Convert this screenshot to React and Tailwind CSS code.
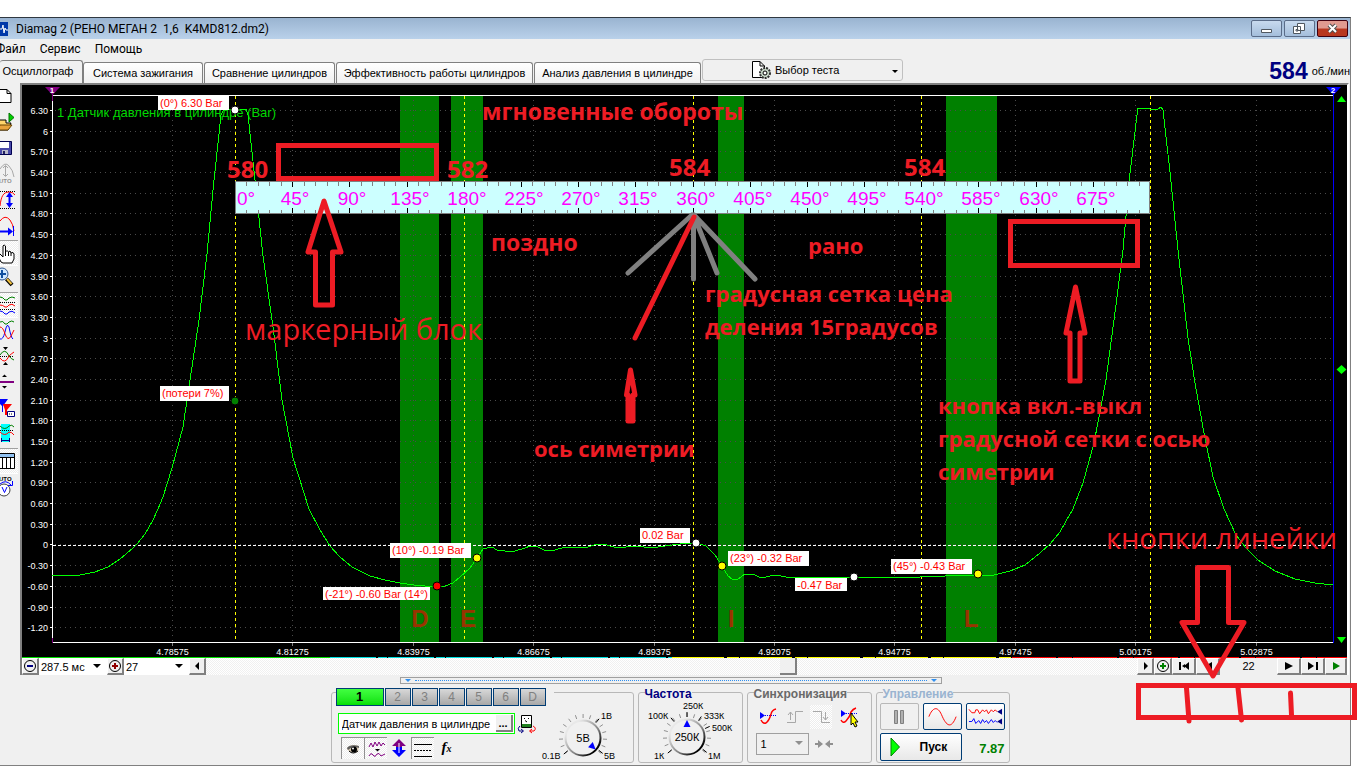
import { Fragment } from "react";
import clsx from "clsx";

const RED = "#ED1C24";

const TABS = [
  { label: "Осциллограф", width: "w-[83px]", active: true },
  { label: "Система зажигания", width: "w-[120px]" },
  { label: "Сравнение цилиндров", width: "w-[131px]" },
  { label: "Эффективность работы цилиндров", width: "w-[197px]" },
  { label: "Анализ давления в цилиндре", width: "w-[167px]" },
];

const Y_LABELS = [
  "6.30", "6", "5.70", "5.40", "5.10", "4.80", "4.50", "4.20", "3.90", "3.60", "3.30",
  "3", "2.70", "2.40", "2.10", "1.80", "1.50", "1.20", "0.90", "0.60", "0.30",
  "0", "-0.30", "-0.60", "-0.90", "-1.20",
];
const X_LABELS = [
  "4.78575", "4.81275", "4.83975", "4.86675", "4.89375",
  "4.92075", "4.94775", "4.97475", "5.00175", "5.02875",
];
const yAt = (i) => Math.round(110 + i * 20.69) + 0.5;
const xAt = (i) => Math.round(172 + i * 120.4) + 0.5;

const BANDS = [
  { x: 400, w: 39, letter: "D", at: 420 },
  { x: 451, w: 32, letter: "E", at: 468 },
  { x: 718, w: 26, letter: "I", at: 731 },
  { x: 946, w: 51, letter: "L", at: 971 },
];

const CURSORS = [235.5, 464.5, 693.5, 921.5, 1150.5];

const TRACE =
  "52,575 80,575 95,572 108,567 120,559 133,548 137,544 145,534 153,520 158,509 163,497 172,468 183,427 190,380 199,320 207,254 213,190 221,115 224,109 232,110 246,109 248,115 255,180 263,256 273,327 282,400 293,458 309,509 320,530 330,546 340,557 352,567 370,576 385,580 400,583 414,585 425,586 437,587 445,586 453,583 460,577 470,568 477,558 483,549 487,548 492,547 497,550 505,551 515,551 525,548 530,546 538,547 546,551 555,550 565,547 585,548 597,544 607,545 617,548 635,546 652,548 665,546 680,544 696,543 706,546 715,555 722,566 728,576 732,579 738,579 745,574 755,575 761,578 775,575 792,578 802,577 854,577 920,577 945,576 978,575 994,575 1010,571 1025,565 1040,553 1050,544 1060,532 1066,521 1073,509 1083,483 1094,443 1099,417 1106,380 1116,305 1123,250 1129,182 1137,115 1138,108 1142,109 1146,108 1150,109 1158,109 1161,107 1163,110 1170,172 1178,250 1188,338 1195,383 1204,433 1213,477 1224,509 1236,535 1246,548 1258,560 1275,571 1295,579 1315,583 1333,585";

const CALLOUTS = [
  { text: "(0°) 6.30 Bar", x: 158, y: 96, w: 71, h: 14 },
  { text: "(потери 7%)", x: 160, y: 386, w: 69, h: 15 },
  { text: "(10°) -0.19 Bar", x: 390, y: 543, w: 81, h: 15 },
  { text: "(-21°) -0.60 Bar (14°)", x: 323, y: 587, w: 107, h: 13 },
  { text: "0.02 Bar", x: 640, y: 528, w: 50, h: 15 },
  { text: "(23°) -0.32 Bar", x: 728, y: 551, w: 81, h: 15 },
  { text: "-0.47 Bar", x: 795, y: 578, w: 52, h: 13 },
  { text: "(45°) -0.43 Bar", x: 891, y: 559, w: 81, h: 15 },
];

const DOTS = [
  { x: 235, y: 110, fill: "#fff" },
  { x: 235, y: 401, fill: "#008000" },
  { x: 437, y: 586, fill: "#f00" },
  { x: 477, y: 558, fill: "#ff0" },
  { x: 696, y: 543, fill: "#fff" },
  { x: 722, y: 566, fill: "#ff0" },
  { x: 854, y: 577, fill: "#fff" },
  { x: 978, y: 574, fill: "#ff0" },
];

const RULER_LABELS = Array.from({ length: 16 }, (_, i) => `${i * 45}°`);
const rulerX = (deg) => 235 + (deg * 915) / 720;

function DegreeRuler() {
  return (
    <g fontFamily="'Liberation Sans', sans-serif" fontSize="19" fill="#f0f" textAnchor="middle">
      <rect x="235" y="181" width="915" height="33" fill="#cff" />
      <path d="M235.5 214V181.5H1149.5V213.5H235" stroke="#808080" fill="none" />
      {Array.from({ length: 79 }, (_, i) => {
        const major = (i + 1) % 5 === 0;
        const x = Math.round(rulerX((i + 1) * 9)) + 0.5;
        return (
          <path
            key={i}
            d={major ? `M${x} 182V187M${x} 208V213` : `M${x} 182V186M${x} 210V213`}
            stroke={major ? "#000" : "#808080"}
          />
        );
      })}
      {RULER_LABELS.map((label, i) => (
        <text key={label} x={i === 0 ? 246 : Math.round(rulerX(i * 45)) + 3} y="205">
          {label}
        </text>
      ))}
    </g>
  );
}

function Scope() {
  return (
    <svg viewBox="22 85 1325 573" className="block w-full bg-black" fontFamily="'Liberation Sans', sans-serif">
      <g shapeRendering="crispEdges">
        {BANDS.map((b) => (
          <rect key={b.letter} x={b.x} y="96" width={b.w} height="546" fill="#008000" />
        ))}
        {Y_LABELS.map((label, i) => (
          <Fragment key={label}>
            <path d={`M55 ${yAt(i)}H1331`} stroke="#4a4a4a" strokeDasharray="1 4" />
            <path d={`M50 ${yAt(i)}H52`} stroke="#fff" />
          </Fragment>
        ))}
        {X_LABELS.map((label, i) => (
          <Fragment key={label}>
            <path d={`M${xAt(i)} 100V641`} stroke="#4a4a4a" strokeDasharray="1 4" />
            <path d={`M${xAt(i)} 643V646`} stroke="#808080" />
          </Fragment>
        ))}
        <path d="M53 545.5H1333" stroke="#fff" strokeDasharray="3 2" />
        {CURSORS.map((x) => (
          <path key={x} d={`M${x} 96V642`} stroke="#ff0" strokeDasharray="3 3" />
        ))}
        <path d="M52 95.5H1333M52.500 95V642.500H1333" stroke="#fff" fill="none" />
        <path d="M52.500 90V101M52.500 638V643" stroke="#800080" />
        <path d="M1333.500 90V643" stroke="#00f" />
      </g>

      <g fill="#fff" fontSize="9">
        {Y_LABELS.map((label, i) => (
          <text key={label} x="48" y={yAt(i) + 3} textAnchor="end">{label}</text>
        ))}
        {X_LABELS.map((label, i) => (
          <text key={label} x={xAt(i)} y="655" textAnchor="middle">{label}</text>
        ))}
      </g>
      <text x="57" y="117" fontSize="13" fill="#00d800">1 Датчик давления в цилиндре (Bar)</text>

      <polyline points={TRACE} fill="none" stroke="#0f0" shapeRendering="crispEdges" />

      <g fontSize="24" fontWeight="700" fill="#993300" textAnchor="middle">
        {BANDS.map((b) => (
          <text key={b.letter} x={b.at} y="627">{b.letter}</text>
        ))}
      </g>

      {CALLOUTS.map((c) => (
        <g key={c.text}>
          <rect x={c.x} y={c.y} width={c.w} height={c.h} fill="#fff" />
          <text x={c.x + 2} y={c.y + 11} fontSize="11" fill="#f00">{c.text}</text>
        </g>
      ))}
      {DOTS.map((d) => (
        <circle key={`${d.x}-${d.y}`} cx={d.x} cy={d.y} r="4" fill={d.fill} stroke="#000" />
      ))}

      <DegreeRuler />

      {/* cursor flags and the level handles on the right */}
      <path d="M45 87H60L52.500 95Z" fill="#800080" />
      <path d="M1326 87H1341L1333.500 95Z" fill="#00f" />
      <g fill="#fff" fontSize="8" fontWeight="700" textAnchor="middle">
        <text x="52" y="93">1</text>
        <text x="1333" y="93">2</text>
      </g>
      <path d="M1337 102L1341.500 96L1346 102ZM1337 637L1341.500 643L1346 637ZM1336.500 369.500L1341.500 365L1346.500 369.500L1341.500 374Z" fill="#0f0" />

      <path d="M22 657.500H330" stroke="#00e000" />
      <path d="M330 657.500H672" stroke="#00e0e0" strokeDasharray="46 2 9 1" />
      <path d="M672 657.500H1012" stroke="#ff0" strokeDasharray="52 3 12 1" />
      <path d="M1012 657.500H1347" stroke="#f00" strokeDasharray="44 2 14 1" />
    </svg>
  );
}

const GRAY = "#a8a8a8";
const TOOLS = [
  {
    name: "Новый",
    icon: <path d="M-5 5.500H7L11 9.500V18.500H-5ZM7 5.500V9.500H11" fill="#fff" stroke="#000" />,
  },
  {
    name: "Открыть",
    icon: (
      <>
        <path d="M-3 20V10H6V13H11L8 20Z" fill="#ffd46b" stroke="#000" />
        <path d="M0 15H12L8 20H-3Z" fill="#e8a33c" stroke="#6b4500" />
        <path d="M9 3L14 7.500L9 12Z" fill="#00d000" stroke="#007000" />
      </>
    ),
  },
  {
    name: "Сохранить",
    icon: (
      <>
        <path d="M-4 5.500H11.500V18.500H-4Z" fill="#4848a8" stroke="#000050" />
        <path d="M0 6H9V12H0Z" fill="#fff" />
        <path d="M2 14H8V18H2Z" fill="#b8b8c8" />
        <path d="M3 15H5V18H3Z" fill="#202060" />
      </>
    ),
  },
  {
    name: "Автомасштаб",
    icon: (
      <>
        <path d="M0 7Q5-1 9 4Q13 8 14 15M5.500 4V14M3 6L5.500 3.500L8 6M3 12L5.500 14.500L8 12" fill="none" stroke={GRAY} />
        <text x="-1" y="21" fontSize="6" fontWeight="700" fill="#909090">UTO</text>
      </>
    ),
  },
  {
    name: "По амплитуде",
    icon: (
      <>
        <path d="M0 3.500H15M0 20.500H15" stroke="#000" strokeDasharray="1 1" />
        <path d="M0 18C1 9 3 4 9 4Q13 4 15 7" fill="none" stroke="#f00" />
        <path d="M9.500 7V17" stroke="#00f" strokeWidth="2" />
        <path d="M6 9L9.500 4L13 9ZM6 15L9.500 20L13 15Z" fill="#00f" />
      </>
    ),
  },
  {
    name: "По времени",
    icon: (
      <>
        <path d="M0 7Q5 0 10 6Q13 10 14 17" fill="none" stroke="#f00" />
        <path d="M0 17.500H10" stroke="#00f" strokeWidth="2" />
        <path d="M8 13.500L13 17.500L8 21.500Z" fill="#00f" />
        <path d="M13.500 12V22" stroke="#00f" />
      </>
    ),
  },
  {
    name: "Рука",
    pressed: true,
    icon: (
      <path
        d="M1 21L-2 15L0 13L3 16V5Q4 3 5.500 5V11L7 9.500L8.500 11L10 10L11 12L13 11.500L14 13V18L12 22H3ZM5.500 11V15M8.500 11V15M11 12V15"
        fill="#fff"
        stroke="#000"
      />
    ),
  },
  {
    name: "Лупа",
    icon: (
      <>
        <circle cx="2" cy="8" r="6" fill="#cfe8ff" stroke="#305890" />
        <path d="M2 4V12M-2 8H6" stroke="#1050a0" strokeWidth="2" />
        <path d="M6.500 13L12 19" stroke="#000" strokeWidth="4" />
        <path d="M7 13L11.500 18" stroke="#f0c040" strokeWidth="2" />
      </>
    ),
  },
  {
    name: "Все каналы",
    pressed: true,
    icon: (
      <g fill="none">
        <path d="M0 4Q3 4 5 7Q7 8 9 5Q12 3 15 5" stroke="#008000" />
        <path d="M0 9.500H15M0 16.500H15" stroke="#000" strokeDasharray="1 1" />
        <path d="M0 12Q3 12 5 14Q7 15 9 12Q12 10 15 13" stroke="#f00" />
        <path d="M0 18Q3 18 5 21Q7 22 9 19Q12 17 15 20" stroke="#00f" />
      </g>
    ),
  },
  {
    name: "Наложение",
    icon: (
      <g fill="none">
        <path d="M0 4Q3 2 5 6Q7 7 9 4Q12 2 14 4" stroke="#008000" />
        <path d="M0 21Q3 22 5 14Q7 4 9 9Q11 20 13 21" stroke="#00f" />
        <path d="M0 9Q3 9 5 16Q8 24 11 18L14 12" stroke="#f00" />
      </g>
    ),
  },
  {
    name: "Совместить",
    icon: (
      <g fill="none">
        <path d="M3 3H8L5.500 6ZM3 21H8L5.500 18Z" fill="#000" />
        <path d="M0 12.500H14" stroke="#000" strokeDasharray="1 1" />
        <path d="M0 11Q5 3 9 12Q11 15 14 16" stroke="#008000" />
        <path d="M0 14Q5 21 9 12Q11 10 14 8" stroke="#f00" />
      </g>
    ),
  },
  {
    name: "Сдвиг",
    icon: (
      <>
        <path d="M2 7H7L4.500 4.500ZM2 16H7L4.500 18.500Z" fill="#000" />
        <path d="M0 12H14" stroke="#800080" strokeWidth="2" />
      </>
    ),
  },
  {
    name: "Маркеры",
    icon: (
      <>
        <path d="M0 3H8L3 10V16H2V10L0 8Z" fill="#00f" />
        <path d="M3 8H12L7 14V19H5V14Z" fill="#f00" />
        <path d="M7.500 15.500H14.500V20.500H7.500Z" fill="#fff" stroke="#000080" />
        <path d="M9 18H13" stroke="#000" strokeDasharray="1 1" />
      </>
    ),
  },
  {
    name: "Область",
    icon: (
      <g fill="none">
        <path d="M1 2H10V20H1Z" fill="#0ff" />
        <path d="M0 4Q5 9 9 4Q12 2 14 5" stroke="#008000" />
        <path d="M0 8.500H14" stroke="#000" strokeDasharray="1 1" />
        <path d="M0 10Q5 15 9 10Q12 10 14 13" stroke="#f00" />
        <path d="M1.500 16V20M9.500 16V20M2 18.500H9" stroke="#000080" />
      </g>
    ),
  },
  {
    name: "Таблица",
    pressed: true,
    icon: (
      <>
        <path d="M-2 4.500H14.500V19.500H-2Z" fill="#fff" stroke="#000" />
        <path d="M0 5H14V8H0Z" fill="#90c0f0" />
        <path d="M0 8.500H14M2.500 8V19M6.500 8V19M10.500 8V19" stroke="#000" />
      </>
    ),
  },
  {
    name: "Авто напряжение",
    icon: (
      <>
        <text x="-1" y="7" fontSize="6" fontWeight="700" fill="#000">UTO</text>
        <circle cx="4" cy="16" r="6" fill="#fff" stroke="#404040" />
        <path d="M0 10Q6 5 11 11M8 11.500H12.500V7" fill="none" stroke="#00f" />
        <path d="M2 13L4.500 18.500L7 13" fill="none" stroke="#00f" />
      </>
    ),
  },
];

function Toolbar() {
  return (
    <div className="flex w-5 shrink-0 flex-col pt-px">
      {TOOLS.map((tool) => (
        <button
          key={tool.name}
          aria-label={tool.name}
          className={clsx(
            "h-[26px] w-[18px] overflow-hidden",
            tool.pressed &&
              "border-t border-b border-t-[#a0a0a0] border-b-white bg-[repeating-conic-gradient(#fff_0_25%,#ededed_0_50%)] bg-[length:2px_2px]"
          )}
        >
          <svg viewBox="0 0 18 26" className="block w-[18px]" fontFamily="'Liberation Sans', sans-serif">
            {tool.icon}
          </svg>
        </button>
      ))}
    </div>
  );
}

function NavButton({ label, width, children }) {
  return (
    <button
      aria-label={label}
      className={clsx(
        "flex shrink-0 items-center justify-center border-t border-r-2 border-b-2 border-l border-t-white border-r-[#808080] border-b-[#808080] border-l-white bg-[#f0f0f0]",
        width
      )}
    >
      <svg viewBox="0 0 14 14" className="h-3.5 w-3.5 shrink-0">{children}</svg>
    </button>
  );
}

function ScrollSelect({ label, value, width }) {
  return (
    <div className={clsx("relative flex shrink-0 bg-white", width)}>
      <select aria-label={label} className="w-full appearance-none pl-0.5 text-[11px] leading-4 outline-none">
        <option>{value}</option>
      </select>
      <svg viewBox="0 0 8 4" className="pointer-events-none absolute top-1.5 right-1.5 h-1 w-2">
        <path d="M0 0H8L4 4Z" />
      </svg>
    </div>
  );
}

function ScrollRow() {
  return (
    <div className="flex h-[17px] bg-white">
      <NavButton label="Сжать" width="w-[17px]">
        <circle cx="7" cy="7" r="5.500" fill="none" stroke="#000" />
        <path d="M4 7H10" stroke="#000080" strokeWidth="2" />
      </NavButton>
      <ScrollSelect label="Развертка" value="287.5 мс" width="w-[68px]" />
      <NavButton label="Растянуть" width="w-[17px]">
        <circle cx="7" cy="7" r="5.500" fill="none" stroke="#000" />
        <path d="M4 7H10M7 4V10" stroke="#900000" strokeWidth="2" />
      </NavButton>
      <ScrollSelect label="Кадр" value="27" width="w-[65px]" />
      <NavButton label="Влево" width="w-[17px]">
        <path d="M9 3V11L5 7Z" />
      </NavButton>
      <div className="flex flex-1 bg-[repeating-conic-gradient(#fff_0_25%,#f0f0f0_0_50%)] bg-[length:2px_2px]">
        <div className="grow-[576]" />
        <button aria-label="Ползунок" className="w-[17px] border-r-2 border-b-2 border-[#808080] bg-[#f0f0f0]" />
        <div className="grow-[341]" />
      </div>
      <NavButton label="Вправо" width="w-[17px]">
        <path d="M6 3V11L10 7Z" />
      </NavButton>
      <NavButton label="Добавить" width="w-[18px]">
        <circle cx="7" cy="7" r="5.500" fill="none" stroke="#000" />
        <path d="M4 7H10M7 4V10" stroke="#008000" strokeWidth="2" />
      </NavButton>
      <NavButton label="В начало" width="w-[24px]">
        <path d="M2 3H4V11H2ZM12 3V11L7 7ZM5 7L8 5V9ZM7 6H9V8H7Z" />
      </NavButton>
      <NavButton label="Назад" width="w-[24px]">
        <path d="M11 3V11L4 7Z" />
      </NavButton>
      <output className="w-[57px] bg-[#f0f0f0] text-center text-[11px] leading-4">22</output>
      <NavButton label="Вперед" width="w-[24px]">
        <path d="M3 3V11L11 7Z" />
      </NavButton>
      <NavButton label="В конец" width="w-[24px]">
        <path d="M2 3V11L8 7ZM10 3H12V11H10Z" />
      </NavButton>
      <NavButton label="Воспроизвести" width="w-[22px]">
        <path d="M4 3V11L11 7Z" fill="#008000" />
      </NavButton>
    </div>
  );
}

function Group({ title, color, width, children }) {
  return (
    <fieldset className={clsx("relative h-[71px] min-w-0 shrink-0 rounded-[3px] border border-[#b8b8b8]", width)}>
      {title && (
        <legend className={clsx("absolute -top-1.5 left-1.5 bg-[#f0f0f0] text-xs leading-[14px] font-bold", color)}>
          {title}
        </legend>
      )}
      {children}
    </fieldset>
  );
}

const polar = (r, deg) => {
  const a = (deg * Math.PI) / 180;
  return `${(r * Math.cos(a)).toFixed(1)} ${(r * Math.sin(a)).toFixed(1)}`;
};

// Rotary switch: origin is the centre of the dial, angles are clockwise from 3 o'clock
function Knob({ id, value, labels, marks, pointer }) {
  return (
    <svg
      viewBox="-44 -36 88 64"
      className="block h-16 w-[88px] shrink-0 overflow-visible"
      fontFamily="'Liberation Sans', sans-serif"
    >
      <defs>
        <linearGradient id={id} x1="0" y1="0" x2="1" y2="1">
          <stop offset="0.2" stopColor="#e8e8e8" />
          <stop offset="0.6" stopColor="#808080" />
          <stop offset="0.85" stopColor="#000" />
        </linearGradient>
      </defs>
      {Array.from({ length: 15 }, (_, i) => (
        <path key={i} d={`M${polar(20, 140 + i * 18.6)}L${polar(24, 140 + i * 18.6)}`} stroke="#909090" />
      ))}
      {marks.map((deg) => (
        <path key={deg} d={`M${polar(20, deg)}L${polar(25, deg)}`} stroke="#000" />
      ))}
      <circle r="17.500" fill="#f0f0f0" stroke={`url(#${id})`} strokeWidth="2" />
      <path d="M17 0L10 3.500V-3.500Z" fill="#00f" transform={`rotate(${pointer})`} />
      <text y="4" fontSize="11" textAnchor="middle">{value}</text>
      <g fontSize="9">
        {labels.map(([text, x, y]) => (
          <text key={text} x={x} y={y}>{text}</text>
        ))}
      </g>
    </svg>
  );
}

const PRESSED =
  "border-t border-l border-[#909090] bg-[repeating-conic-gradient(#fff_0_25%,#ededed_0_50%)] bg-[length:2px_2px]";

function ChannelGroup() {
  return (
    <Group width="w-[303px]">
      <div className="-mt-[5px] ml-1 flex w-fit gap-px bg-[#f0f0f0] pr-2 text-xs">
        <button className="h-[18px] w-12 border border-[#003c74] bg-linear-to-b from-[#40ff40] to-[#00e000] text-[13px] leading-4 font-bold">
          1
        </button>
        {["2", "3", "4", "5", "6", "D"].map((ch) => (
          <button
            key={ch}
            className="h-[18px] w-[26px] border border-[#003c74] bg-linear-to-b from-[#d8d8d8] to-[#a8a8a8] leading-4 text-[#808080]"
          >
            {ch}
          </button>
        ))}
      </div>
      <div className="flex">
        <div className="w-[207px] pt-[7px] pl-1.5">
          <div className="flex items-center gap-0.5">
            <div className="flex h-[21px] w-[177px] items-center border border-[#00ff00] bg-white pr-px">
              <input
                aria-label="Название канала"
                defaultValue="Датчик давления в цилиндре"
                className="min-w-0 flex-1 pl-[3px] text-[11px] leading-4 outline-none"
              />
              <button
                aria-label="Выбрать датчик"
                className="h-[17px] w-[17px] border-r-2 border-b-2 border-[#808080] bg-[#f0f0f0] text-[11px] leading-[8px] font-bold"
              >
                ...
              </button>
            </div>
            <svg viewBox="0 0 20 20" className="h-5 w-5" fill="none">
              <path d="M4.500 1.500H14.500V13.500H4.500Z" fill="#fff" stroke="#000" />
              <path d="M5 10H14V13H5Z" fill="#208020" />
              <path d="M7 4.500H8M11 4.500H12M8 6.500L10 8" stroke="#000" />
              <path d="M3 12Q0 14 2 17H6M4 15L6.500 17L4 19" stroke="#000080" />
              <path d="M16 12Q20 14 17 17H13M15 15L12.500 17L15 19" stroke="#f00" />
            </svg>
          </div>
          <div className="flex items-center pt-[3px] pl-[3px]">
            <button aria-label="Показать" className={clsx("h-[22px] w-[23px]", PRESSED)}>
              <svg viewBox="0 0 22 21" className="block w-full">
                <path d="M5 10Q9 5 17 8L16 14Q9 16 5 11Z" fill="#d8c8b0" />
                <path d="M5 10Q8 6 17 8V10Q11 7 6 12Z" fill="#606060" />
                <circle cx="12" cy="11.500" r="3" />
                <circle cx="11" cy="10.500" r="1" fill="#fff" />
                <path d="M7 13Q11 17 16 13" fill="none" stroke="#000" />
              </svg>
            </button>
            <button aria-label="Фильтр" className={clsx("h-[22px] w-[23px]", PRESSED)}>
              <svg viewBox="0 0 22 21" className="block w-full" fill="none" stroke="#800080">
                <path d="M4 9L6 5L8 9L10 4L12 8L14 4L16 8L18 5L20 7" />
                <path d="M4 18Q6 14 8 17Q10 20 12 16Q14 14 16 18Q18 17 20 16" />
                <path d="M10 11H15L12.500 13.500Z" fill="#000" stroke="none" />
              </svg>
            </button>
            <button aria-label="Инвертировать" className="h-[22px] w-6">
              <svg viewBox="0 0 24 22" className="block w-full">
                <path d="M5 9L12 2L19 9H15V12H9V9Z" fill="#800080" />
                <path d="M5 13L12 20L19 13H15V10H9V13Z" fill="#00f" />
                <path d="M12 6V16" stroke="#fff" />
              </svg>
            </button>
            <button aria-label="Линии" className={clsx("h-[22px] w-[23px]", PRESSED)}>
              <svg viewBox="0 0 22 21" className="block w-full" stroke="#000" shapeRendering="crispEdges">
                <path d="M2 6.500H20M2 18.500H20" />
                <path d="M2 12.500H20" strokeDasharray="2 1" />
              </svg>
            </button>
            <button className="h-[22px] pl-2 font-['Liberation_Serif',serif] text-[15px] leading-5 font-bold italic">
              f<span className="text-[10px]">x</span>
            </button>
          </div>
        </div>
        <div className="-mt-1">
          <Knob
            id="volts"
            value="5В"
            pointer={42}
            marks={[140, -50, 38]}
            labels={[["0.1В", -41, 21], ["1В", 18, -19], ["5В", 21, 21]]}
          />
        </div>
      </div>
    </Group>
  );
}

function SyncGroup() {
  return (
    <Group title="Синхронизация" color="text-[#696969]" width="w-[125px]">
      <div className="flex flex-col gap-1 pt-3 pl-2">
        <div className="flex items-center gap-[5px]">
          <button aria-label="Уровень" className="h-6 w-[22px]">
            <svg viewBox="0 0 22 24" className="block w-full" fill="none">
              <path d="M4 7L9 10.500L4 14Z" fill="#00f" />
              <path d="M5 10.500H20" stroke="#00f" strokeDasharray="1 1" />
              <path d="M5 15Q7 19 10 18Q13 16 15 9Q16 5 20 4" stroke="#f00" strokeWidth="1.500" />
            </svg>
          </button>
          <button aria-label="Фронт" className="h-6 w-[22px]">
            <svg viewBox="0 0 22 24" className="block w-full" fill="none" stroke={GRAY}>
              <path d="M4 17.500H12.500V6.500H20M7.500 7V15M5 10L7.500 7L10 10" />
            </svg>
          </button>
          <button
            aria-label="Спад"
            className="h-6 w-[22px] bg-[repeating-conic-gradient(#fff_0_25%,#ededed_0_50%)] bg-[length:2px_2px]"
          >
            <svg viewBox="0 0 22 24" className="block w-full" fill="none" stroke={GRAY}>
              <path d="M3 6.500H11.500V17.500H20M15.500 7V15M13 12L15.500 15L18 12" />
            </svg>
          </button>
          <button aria-label="Захват" className="h-6 w-[22px]">
            <svg viewBox="0 0 22 24" className="block w-full" fill="none">
              <path d="M4 5L9 8.500L4 12Z" fill="#00f" />
              <path d="M5 8.500H20" stroke="#00f" strokeDasharray="1 1" />
              <path d="M4 15Q6 19 9 16Q13 12 14 7Q16 4 19 3" stroke="#f00" strokeWidth="1.500" />
              <path d="M14 8V20L16 18L18 22L20 21L18 17H21Z" fill="#ff0" stroke="#000" />
            </svg>
          </button>
        </div>
        <div className="flex items-center gap-[5px]">
          <div className="relative flex">
            <select
              aria-label="Канал синхронизации"
              className="h-[22px] w-[53px] appearance-none border border-[#a0a0a0] pl-1 text-[11px] outline-none"
            >
              <option>1</option>
            </select>
            <svg viewBox="0 0 8 4" className="pointer-events-none absolute top-2 right-1.5 h-1 w-2">
              <path d="M0 0H8L4 4Z" fill="#909090" />
            </svg>
          </div>
          <svg viewBox="0 0 20 12" className="h-3 w-5">
            <path d="M1 5H4V2L9 6L4 10V7H1ZM19 5H16V2L11 6L16 10V7H19Z" fill="#909090" />
          </svg>
        </div>
      </div>
    </Group>
  );
}

function ControlGroup() {
  return (
    <Group title="Управление" color="text-[#9ab4d1]" width="w-[134px]">
      <div className="grid grid-cols-3 gap-x-1 gap-y-[3px] px-[3px] pt-2.5 pr-1">
        <button aria-label="Пауза" className="flex h-[27px] items-center justify-center rounded-xs border border-[#b8b8b8]">
          <svg viewBox="0 0 14 16" className="h-4 w-3.5" fill="#b0b0b0" stroke="#808080">
            <path d="M2.500 1.500H5.500V14.500H2.500ZM8.500 1.500H11.500V14.500H8.500Z" />
          </svg>
        </button>
        <button aria-label="Синус" className="h-[27px] rounded-xs border border-[#003c74] bg-linear-to-b from-white to-[#e8e8e8]">
          <svg viewBox="0 0 38 25" className="block w-full" fill="none" stroke="#f00">
            <path d="M5 13C9 3 14 2 18 11C23 23 28 26 33 13" />
          </svg>
        </button>
        <button aria-label="Поток" className="h-[27px] rounded-xs border border-[#003c74] bg-linear-to-b from-white to-[#e8e8e8]">
          <svg viewBox="0 0 38 25" className="block w-full" fill="none">
            <path d="M2 5.500L5 9L8 9L9 6L11 6L13 10L16 6L18 8L20 6L22 10L25 6L27 8L29 6L31 8" stroke="#f00" />
            <path d="M2 18L5 18L7 15L9 20L12 17L14 20L16 16L18 19L20 17L22 20L25 16L27 19L29 17L31 19" stroke="#00f" />
            <path d="M36 5V11L31 8ZM36 15V21L31 18Z" fill="#000080" />
          </svg>
        </button>
        <button className="col-span-2 flex h-7 items-center rounded-xs border border-[#003c74] bg-linear-to-b from-white to-[#e8e8e8] pl-[9px] text-xs font-bold">
          <svg viewBox="0 0 10 20" className="mr-5 h-5 w-2.5">
            <path d="M1 1V19L9.500 10Z" fill="#0f0" stroke="#008000" />
          </svg>
          Пуск
        </button>
        <output className="self-center pt-1 text-right text-[13px] leading-4 font-bold text-[#008000]">7.87</output>
      </div>
    </Group>
  );
}

// Hand-drawn notes laid over the whole window
function Notes() {
  return (
    <svg
      viewBox="0 0 1360 768"
      className="pointer-events-none absolute top-0 left-0 w-full"
      fontFamily="'Open Sans', sans-serif"
      fill={RED}
    >
      <g fill="none" stroke="#808080" strokeWidth="5" strokeLinecap="round">
        <path d="M692 215L628 273M693.500 216V279M694 216L717 273M694 215L755 279" />
        <path d="M694 217L635 338" stroke={RED} />
      </g>
      <g fill="none" stroke={RED} strokeWidth="5" strokeLinejoin="round" strokeLinecap="round">
        <rect x="278.500" y="145.500" width="158" height="33" strokeLinejoin="miter" />
        <rect x="1010.500" y="221.500" width="127" height="44" strokeLinejoin="miter" />
        <rect x="1138.500" y="685.500" width="216" height="32" strokeLinejoin="miter" />
        <path d="M1186.500 688L1189 721M1238 688L1241.500 720M1290.500 693L1291.500 715" />
        <path d="M324 201L308 252H315.500V305H332.500V252H341Z" />
        <path d="M1075.500 287L1066 333H1070V381H1080V333H1085L1075.500 287Z" />
        <path d="M630.500 370L626.500 395H628V421H633V395H635L630.500 370Z" />
        <path d="M1197.500 567.500H1228.500V622.500H1244L1213 676L1182 622.500H1197.500Z" />
      </g>
      <g fontSize="24" fontWeight="700">
        <text x="227" y="178">580</text>
        <text x="447" y="178">582</text>
        <text x="669" y="176">584</text>
        <text x="904" y="176">584</text>
      </g>
      <g fontSize="22" fontWeight="700">
        <text x="482" y="120" fontSize="23">мгновенные обороты</text>
        <text x="491" y="251" fontSize="23">поздно</text>
        <text x="808" y="254">рано</text>
        <text x="705" y="302">градусная сетка цена</text>
        <text x="705" y="335">деления 15градусов</text>
        <text x="534" y="457">ось симетрии</text>
        <text x="938" y="414">кнопка вкл.-выкл</text>
        <text x="938" y="447">градусной сетки с осью</text>
        <text x="938" y="480">симетрии</text>
      </g>
      <g fontSize="29">
        <text x="245" y="340">маркерный блок</text>
        <text x="1106" y="549">кнопки линейки</text>
      </g>
    </svg>
  );
}

export default function App() {
  return (
    <div className="relative min-h-screen overflow-hidden bg-white pt-[17px] pr-[9px] font-['Liberation_Sans',Arial,sans-serif] text-black">
      <div className="border-t border-r border-b border-t-[#303840] border-r-[#808080] border-b-[#808080] bg-[#f0f0f0] pb-0.5">
        {/* Title bar */}
        <header className="flex h-[21px] items-center bg-linear-to-b from-[#9ab4d1] to-[#b9d1ea] pr-0.5">
          <svg viewBox="0 0 8 16" className="mr-2 h-4 w-2">
            <path d="M0 1H8V15H0Z" fill="#0038a8" />
            <path d="M0 8H2L3 4L4 12L5 7L6 9H8" fill="none" stroke="#fff" />
          </svg>
          <h1 className="flex-1 font-[Roboto,sans-serif] text-xs leading-4 whitespace-pre">
            Diamag 2 (РЕНО МЕГАН 2  1,6  K4MD812.dm2)
          </h1>
          <div className="flex gap-0.5">
            <button aria-label="Свернуть" className="h-[17px] w-[31px] rounded-xs border border-[#5a6c88] bg-linear-to-b from-[#c8daee] to-[#a4bedb]">
              <svg viewBox="0 0 29 15" className="block w-full">
                <path d="M9.500 8.500H19.500V11.500H9.500Z" fill="#fff" stroke="#505860" />
              </svg>
            </button>
            <button aria-label="Восстановить" className="h-[17px] w-[31px] rounded-xs border border-[#5a6c88] bg-linear-to-b from-[#c8daee] to-[#a4bedb]">
              <svg viewBox="0 0 29 15" className="block w-full" fill="#fff" stroke="#505860">
                <path d="M12.500 2.500H19.500V9.500H12.500ZM8.500 5.500H15.500V12.500H8.500ZM11 8.500H13V10H11Z" />
              </svg>
            </button>
            <button aria-label="Закрыть" className="h-[17px] w-[31px] rounded-xs border border-[#400010] bg-linear-to-b from-[#e09a90] from-45% to-[#b83820] to-55%">
              <svg viewBox="0 0 29 15" className="block w-full">
                <path d="M11 4L18 11M18 4L11 11" stroke="#505050" strokeWidth="4" />
                <path d="M11 4L18 11M18 4L11 11" stroke="#fff" strokeWidth="2" />
              </svg>
            </button>
          </div>
        </header>

        {/* Menu */}
        <nav className="-ml-1 flex h-5 items-center gap-3.5 font-[Roboto,sans-serif] text-xs">
          <button>Файл</button>
          <button>Сервис</button>
          <button>Помощь</button>
        </nav>

        {/* Tabs */}
        <div className="flex h-6 items-end text-[11px]">
          {TABS.map((tab) => (
            <button
              key={tab.label}
              className={clsx(
                "shrink-0 rounded-t-[3px] border-t border-r border-[#808080] whitespace-nowrap",
                tab.width,
                tab.active
                  ? "h-[23px] pr-1.5 pb-0.5"
                  : "mr-px h-[21px] border-l bg-linear-to-b from-white to-[#f0f0f0]"
              )}
            >
              {tab.label}
            </button>
          ))}
          <button className="relative mb-0.5 flex h-[22px] w-[201px] shrink-0 items-center rounded-[3px] border border-[#c0c0c0] pl-[48px]">
            <svg viewBox="0 0 22 20" className="mr-0.5 h-5 w-[22px]">
              <path d="M1.500 1.500H9L13.500 6V17.500H1.500ZM9 1.500V6H13.500" fill="#fff" stroke="#000" />
              <circle cx="14" cy="13" r="5" fill="#c8d8c8" stroke="#303030" strokeWidth="2" strokeDasharray="2 1" />
              <circle cx="14" cy="13" r="2" fill="#fff" stroke="#000" />
            </svg>
            Выбор теста
            <svg viewBox="0 0 6 3" className="absolute top-2.5 right-1 h-[3px] w-1.5">
              <path d="M0 0H6L3 3Z" />
            </svg>
          </button>
          <div className="ml-auto flex items-center gap-1 whitespace-nowrap">
            <output className="text-[23px] leading-6 font-bold text-[#000080]">584</output>
            <span>об./мин</span>
          </div>
        </div>

        <div className="flex">
          <Toolbar />
          <main className="mr-px min-w-0 flex-1 border-2 border-t-[#808080] border-r-white border-b-0 border-l-[#808080]">
            <Scope />
            <ScrollRow />
          </main>
        </div>

        {/* Splitter */}
        <div className="mt-0.5 pr-2">
          <div className="mx-auto flex h-[7px] w-[542px] items-center gap-1 border border-[#a0a0a0] px-1">
            <svg viewBox="0 0 6 3" className="h-[3px] w-1.5">
              <path d="M0 0H6L3 3Z" fill="#3090f0" />
            </svg>
            <div className="flex-1 border-t border-dotted border-[#3090f0]" />
            <svg viewBox="0 0 6 3" className="h-[3px] w-1.5">
              <path d="M0 0H6L3 3Z" fill="#3090f0" />
            </svg>
          </div>
        </div>

        <div className="flex justify-center gap-1 pt-2 pr-2.5">
          <ChannelGroup />
          <Group title="Частота" color="text-[#000080]" width="w-[105px]">
            <div className="flex pt-2 pl-1">
              <Knob
                id="freq"
                value="250К"
                pointer={-90}
                marks={[140, -130, -90, -55, -25, 38]}
                labels={[
                  ["100К", -39, -18],
                  ["250К", -4, -28],
                  ["333К", 17, -18],
                  ["500К", 25, -6],
                  ["1К", -33, 22],
                  ["1М", 21, 22],
                ]}
              />
            </div>
          </Group>
          <SyncGroup />
          <ControlGroup />
        </div>
      </div>
      <Notes />
    </div>
  );
}
